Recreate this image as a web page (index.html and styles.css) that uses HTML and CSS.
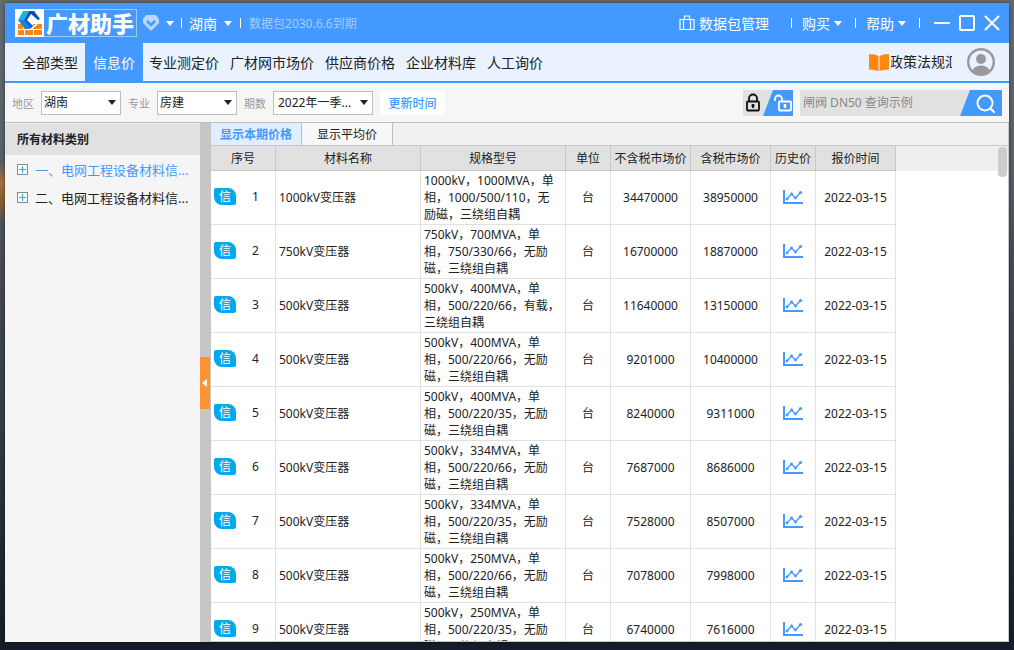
FILE: index.html
```html
<!DOCTYPE html>
<html lang="zh-CN">
<head>
<meta charset="utf-8">
<title>广材助手</title>
<link rel="stylesheet" href="styles.css">
</head>
<body>
<svg class="defs">
<symbol id="chart" viewBox="0 0 20 16">
<path d="M1 0V13H20" fill="none" stroke="#4499ff" stroke-width="2"/>
<path d="M4 9L8.500 4L12.500 8L17.500 2.500" fill="none" stroke="#4499ff" stroke-width="1.300"/>
<circle cx="4" cy="9" r="1.400" fill="#4499ff"/><circle cx="8.500" cy="4" r="1.400" fill="#4499ff"/><circle cx="12.500" cy="8" r="1.400" fill="#4499ff"/><circle cx="17.500" cy="2.500" r="1.600" fill="#4499ff"/>
</symbol>
<symbol id="plus" viewBox="0 0 11 11">
<rect x="0.500" y="0.500" width="10" height="10" fill="#fff" stroke="#8a8a8a"/>
<path d="M2 5.500H9M5.500 2V9" stroke="#29b6d8" stroke-width="1"/>
</symbol>
</svg>
<div class="window">

<header class="titlebar">
<div class="logo">
<svg class="mark" width="29" height="28" viewBox="0 0 29 28">
<rect width="29" height="28" fill="#fff"/>
<path d="M3 15H8V20H3ZM9 16L12 20H9ZM18 15H27V20H18ZM3 21H9V26H3ZM10 21H18V26H10ZM19 21H27V26H19Z" fill="#ff8614"/>
<path d="M2 11L8 2H14L8 11L17 19L22 15" fill="none" stroke="#fff" stroke-width="1.500"/>
<path d="M3 11L8 2H14L9 11Z" fill="#1cb2f0"/>
<path d="M9 11L14 2H19L25 10L23 11L16 5L12 11Z" fill="#0a50b4"/>
<path d="M3 11H11L18 17L15 20H10Z" fill="#1684e4"/>
<path d="M9 11H12L18 17L16 19Z" fill="#0a60c8"/>
</svg>
<span class="name">广材助手</span>
</div>
<svg class="gem" width="16" height="16" viewBox="0 0 16 16"><path d="M3 0H13L16 4V8L8 16L0 8V4Z" fill="#b9d8ff"/><path d="M4 6L8 10L12 6" fill="none" stroke="#4499ff" stroke-width="2.500"/></svg>
<i class="down"></i>
<i class="sep"></i>
<button class="menu city">湖南<i class="down"></i></button>
<i class="sep wide"></i>
<span class="expire">数据包2030.6.6到期</span>
<div class="right">
<button class="menu bag"><svg width="16" height="16" viewBox="0 0 16 16"><path d="M1 4.500H15V14.500H1ZM5.500 4V1H10.500V4M4.500 5V14M11.500 5V14" fill="none" stroke="#fff" stroke-width="1.200"/></svg>数据包管理</button>
<i class="sep"></i>
<button class="menu">购买<i class="down"></i></button>
<i class="sep"></i>
<button class="menu">帮助<i class="down"></i></button>
<i class="sep"></i>
<div class="winbtns">
<button aria-label="最小化"><svg width="16" height="16" viewBox="0 0 16 16"><path d="M0 8H16" stroke="#fff" stroke-width="2"/></svg></button>
<button aria-label="最大化"><svg width="16" height="16" viewBox="0 0 16 16"><rect x="1" y="1" width="14" height="14" rx="1" fill="none" stroke="#fff" stroke-width="2"/></svg></button>
<button aria-label="关闭"><svg width="16" height="16" viewBox="0 0 16 16"><path d="M1 1L15 15M15 1L1 15" stroke="#fff" stroke-width="2"/></svg></button>
</div>
</div>
</header>

<nav class="nav">
<a href="#" class="first">全部类型</a>
<a href="#" class="active">信息价</a>
<a href="#">专业测定价</a>
<a href="#">广材网市场价</a>
<a href="#">供应商价格</a>
<a href="#">企业材料库</a>
<a href="#">人工询价</a>
<div class="user">
<svg width="20" height="17" viewBox="0 0 20 17"><path d="M0 0Q6 0 9.500 2V17Q6 15.500 0 15.500Z" fill="#ff870f"/><path d="M20 0Q14 0 10.500 2V17Q14 15.500 20 15.500Z" fill="#ff870f"/></svg>
<a href="#" class="law">政策法规汇</a>
<svg class="avatar" width="28" height="28" viewBox="0 0 28 28">
<clipPath id="face"><circle cx="14" cy="14" r="13"/></clipPath>
<circle cx="14" cy="14" r="12.800" fill="#eaf1ff" stroke="#999" stroke-width="2.400"/>
<circle cx="14" cy="11" r="5" fill="#999"/>
<ellipse cx="14" cy="24" rx="9" ry="6.500" fill="#999" clip-path="url(#face)"/>
</svg>
</div>
</nav>

<div class="filters">
<label for="area">地区</label>
<select id="area"><option>湖南</option></select>
<label for="major">专业</label>
<select id="major"><option>房建</option></select>
<label for="period">期数</label>
<select id="period" class="wide"><option>2022年一季...</option></select>
<button class="update">更新时间</button>
<button class="lock" aria-label="锁定">
<svg width="50" height="26" viewBox="0 0 50 26">
<path d="M30 0H50V26H20Z" fill="#4499ff"/>
<path d="M6 11V8.500A4 4 0 0 1 14 8.500V11" fill="none" stroke="#111" stroke-width="1.800"/>
<rect x="4" y="11.500" width="12" height="9" rx="1" fill="none" stroke="#111" stroke-width="1.800"/>
<path d="M10 14V18M8.500 15.500H11.500" stroke="#111" stroke-width="1.800"/>
<path d="M32 11V9A3.500 3.500 0 0 1 39 9V12" fill="none" stroke="#fff" stroke-width="1.800"/>
<rect x="36" y="11.500" width="12" height="9" rx="1" fill="#4499ff" stroke="#fff" stroke-width="1.800"/>
<path d="M42 14V18" stroke="#fff" stroke-width="2.500"/>
</svg>
</button>
<div class="search">
<input type="text" aria-label="搜索" placeholder="闸阀 DN50 查询示例">
<button aria-label="查询"><svg width="42" height="26" viewBox="0 0 42 26"><path d="M10 0H42V26H0Z" fill="#4499ff"/><circle cx="25" cy="13" r="7.500" fill="none" stroke="#fff" stroke-width="2"/><path d="M30.500 18.500L34 22" stroke="#fff" stroke-width="2.200" stroke-linecap="round"/></svg></button>
</div>
</div>

<main class="main">
<aside class="side">
<h2>所有材料类别</h2>
<a href="#" class="on"><svg width="11" height="11"><use href="#plus"/></svg>一、电网工程设备材料信...</a>
<a href="#"><svg width="11" height="11"><use href="#plus"/></svg>二、电网工程设备材料信...</a>
</aside>
<div class="split"><button aria-label="收起"><svg width="5" height="8" viewBox="0 0 5 8"><path d="M5 0V8L0 4Z" fill="#fff"/></svg></button></div>

<section class="content">
<div class="tabs">
<button class="on">显示本期价格</button>
<button>显示平均价</button>
</div>
<div class="grid">
<table>
<thead>
<tr><th class="c1">序号</th><th class="c2">材料名称</th><th class="c2">规格型号</th><th class="c3">单位</th><th class="c4">不含税市场价</th><th class="c4">含税市场价</th><th class="c3">历史价</th><th class="c4">报价时间</th></tr>
</thead>
<tbody>
<tr><td><div class="no"><b>信</b><span>1</span></div></td><td class="l">1000kV变压器</td><td class="l">1000kV，1000MVA，单相，1000/500/110，无励磁，三绕组自耦</td><td>台</td><td>34470000</td><td>38950000</td><td><svg width="20" height="16"><use href="#chart"/></svg></td><td>2022-03-15</td></tr>
<tr><td><div class="no"><b>信</b><span>2</span></div></td><td class="l">750kV变压器</td><td class="l">750kV，700MVA，单相，750/330/66，无励磁，三绕组自耦</td><td>台</td><td>16700000</td><td>18870000</td><td><svg width="20" height="16"><use href="#chart"/></svg></td><td>2022-03-15</td></tr>
<tr><td><div class="no"><b>信</b><span>3</span></div></td><td class="l">500kV变压器</td><td class="l">500kV，400MVA，单相，500/220/66，有载，三绕组自耦</td><td>台</td><td>11640000</td><td>13150000</td><td><svg width="20" height="16"><use href="#chart"/></svg></td><td>2022-03-15</td></tr>
<tr><td><div class="no"><b>信</b><span>4</span></div></td><td class="l">500kV变压器</td><td class="l">500kV，400MVA，单相，500/220/66，无励磁，三绕组自耦</td><td>台</td><td>9201000</td><td>10400000</td><td><svg width="20" height="16"><use href="#chart"/></svg></td><td>2022-03-15</td></tr>
<tr><td><div class="no"><b>信</b><span>5</span></div></td><td class="l">500kV变压器</td><td class="l">500kV，400MVA，单相，500/220/35，无励磁，三绕组自耦</td><td>台</td><td>8240000</td><td>9311000</td><td><svg width="20" height="16"><use href="#chart"/></svg></td><td>2022-03-15</td></tr>
<tr><td><div class="no"><b>信</b><span>6</span></div></td><td class="l">500kV变压器</td><td class="l">500kV，334MVA，单相，500/220/66，无励磁，三绕组自耦</td><td>台</td><td>7687000</td><td>8686000</td><td><svg width="20" height="16"><use href="#chart"/></svg></td><td>2022-03-15</td></tr>
<tr><td><div class="no"><b>信</b><span>7</span></div></td><td class="l">500kV变压器</td><td class="l">500kV，334MVA，单相，500/220/35，无励磁，三绕组自耦</td><td>台</td><td>7528000</td><td>8507000</td><td><svg width="20" height="16"><use href="#chart"/></svg></td><td>2022-03-15</td></tr>
<tr><td><div class="no"><b>信</b><span>8</span></div></td><td class="l">500kV变压器</td><td class="l">500kV，250MVA，单相，500/220/66，无励磁，三绕组自耦</td><td>台</td><td>7078000</td><td>7998000</td><td><svg width="20" height="16"><use href="#chart"/></svg></td><td>2022-03-15</td></tr>
<tr><td><div class="no"><b>信</b><span>9</span></div></td><td class="l">500kV变压器</td><td class="l">500kV，250MVA，单相，500/220/35，无励磁，三绕组自耦</td><td>台</td><td>6740000</td><td>7616000</td><td><svg width="20" height="16"><use href="#chart"/></svg></td><td>2022-03-15</td></tr>
</tbody>
</table>
<div class="thumb"></div>
</div>
</section>
</main>
</div>
</body>
</html>
```
FILE: styles.css
```css
*{box-sizing: border-box;}
body{
	margin: 0;
	height: 100vh;
	padding: 3px 5px 8px;
	overflow: hidden;
	background: linear-gradient(transparent 25%, #a8713c 28%, #8a6038 31%, transparent 34%) left / 5px 100% no-repeat,
		linear-gradient(#656c70, #5a6268 25%, #474c58 40%, #353c49 65%, #1b2531 90%, #151d2a);
	font-family: "Noto Sans", "Noto Sans CJK SC", sans-serif;
	font-size: 12px;
	color: #222;
}
button,input,select{
	font: inherit;
	color: inherit;
	border: 0;
	padding: 0;
	margin: 0;
	background: none;
}
a{color: inherit; text-decoration: none;}
svg{display: block; flex: none;}
.defs{display: none;}
.window{
	height: 100%;
	display: flex;
	flex-direction: column;
	background: #fff;
	box-shadow: 0 0 4px rgba(0,0,0,.5);
}

/* title bar */
.titlebar{
	height: 40px;
	flex: none;
	display: flex;
	align-items: center;
	padding: 0 9px 0 10px;
	background: #4499ff;
	color: #fff;
	font-size: 14px;
	white-space: nowrap;
}
.logo{
	display: flex;
	align-items: center;
	height: 28px;
	border: 1px solid #9ccaff;
	border-left: 0;
}
.name{
	padding: 0 2px;
	font-size: 22px;
	line-height: 26px;
	font-weight: 900;
}
.gem{margin: 0 7px 0 6px;}
.down{
	border: 4px solid transparent;
	border-top: 5px solid #fff;
	border-bottom: 0;
}
.sep{
	width: 1px;
	height: 10px;
	margin: 0 7px;
	background: #fff;
}
.sep.wide{margin: 0 8px;}
.menu{
	display: flex;
	align-items: center;
	gap: 4px;
}
.city{gap: 7px;}
.expire{font-size: 12px; color: #a4ceff;}
.right{
	display: flex;
	align-items: center;
	margin-left: auto;
}
.right .sep{margin: 0 10px 0 13px;}
.right .bag{margin-right: 9px;}
.winbtns{
	display: flex;
	gap: 9px;
	margin-left: 4px;
}

/* main nav */
.nav{
	height: 40px;
	flex: none;
	display: flex;
	border-bottom: 2px solid #4499ff;
	background: #eaf1ff;
	font-size: 14px;
	line-height: 40px;
	white-space: nowrap;
}
.nav > a{padding: 0 5px 0 6px;}
.nav .first{padding: 0 7px 0 17px;}
.nav .active{
	padding: 0 8px;
	background: #4499ff;
	color: #fff;
}
.user{
	display: flex;
	align-items: center;
	margin: 0 14px 0 auto;
}
.law{
	width: 61px;
	margin: 0 15px 0 2px;
	overflow: hidden;
	text-indent: -2px;
}

/* filters */
.filters{
	flex: none;
	display: flex;
	align-items: center;
	gap: 7px;
	height: 40px;
	padding: 0 7px;
	border-bottom: 1px solid #bebebe;
	background: #f6f6f6;
}
.filters label{font-size: 11px; color: #999;}
.filters select{
	appearance: none;
	width: 80px;
	height: 24px;
	padding-left: 2px;
	border: 1px solid #bebebe;
	background: #fff url("data:image/svg+xml,%3Csvg xmlns='http://www.w3.org/2000/svg' width='8' height='5'%3E%3Cpath d='M0 0H8L4 5Z' fill='%23222'/%3E%3C/svg%3E") no-repeat right 4px center;
}
.filters .wide{width: 100px; padding-left: 4px;}
.update{
	width: 65px;
	height: 24px;
	background: #fff;
	color: #4499ff;
	font-weight: 500;
}
.lock{
	margin-left: auto;
	background: #e1e1e1;
}
.search{
	display: flex;
	width: 202px;
	background: #e1e1e1;
}
.search input{
	flex: 1;
	min-width: 0;
	padding-left: 3px;
}
.search input::placeholder{color: #888;}

/* body */
.main{
	flex: 1;
	min-height: 0;
	display: flex;
}
.side{
	width: 195px;
	flex: none;
	background: #f5f5f5;
	font-size: 13px;
	white-space: nowrap;
}
.side h2{
	margin: 0;
	padding-left: 12px;
	border-top: 1px solid #efefef;
	background: #e1e1e1;
	font-size: 12px;
	line-height: 31px;
}
.side a{
	display: flex;
	align-items: center;
	gap: 7px;
	height: 28px;
	padding-left: 12px;
}
.side .on{color: #4499ff;}
.split{
	width: 11px;
	flex: none;
	display: flex;
	align-items: center;
	background: #c8c6c4;
}
.split button{
	width: 10px;
	height: 52px;
	padding-left: 2px;
	background: #ff9233;
}
.content{
	flex: 1;
	min-width: 0;
	display: flex;
	flex-direction: column;
	border-right: 1px solid #c8c8c8;
	border-bottom: 1px solid #c8c8c8;
}
.tabs{
	flex: none;
	display: flex;
	height: 23px;
	border-bottom: 1px solid #c8c8c8;
	background: #f1f1f1;
}
.tabs button{
	width: 91px;
	border-right: 1px solid #bebebe;
	background: #f7f7f7;
}
.tabs .on{
	background: #e1eeff;
	color: #4499ff;
	font-weight: bold;
}

/* price table */
.grid{
	position: relative;
	flex: 1;
	min-height: 0;
	overflow: hidden;
	background: linear-gradient(#efefef 25px, #fff 25px);
}
table{
	table-layout: fixed;
	width: 685px;
	border-collapse: separate;
	border-spacing: 0;
}
th{
	height: 25px;
	padding: 1px 0 0;
	border-right: 1px solid #c8c8c8;
	border-bottom: 1px solid #c8c8c8;
	background: #e1e1e1;
	font-weight: normal;
	line-height: 23px;
	white-space: nowrap;
}
td{
	height: 54px;
	padding: 0;
	border-right: 1px solid #e1e1e1;
	border-bottom: 1px solid #e1e1e1;
	background: #fff;
	text-align: center;
	line-height: 17px;
}
.c1{width: 65px;}
.c2{width: 145px;}
.c3{width: 45px;}
.c4{width: 80px;}
.l{text-align: left; padding: 0 4px 0 3px;}
td svg{margin: 0 auto;}
.no{
	display: flex;
	align-items: center;
	padding: 0 0 2px 3px;
}
.no b{
	width: 22px;
	border-radius: 2px 8px 2px 8px;
	background: #00a8f0;
	color: #fff;
	font-weight: normal;
}
.no span{flex: 1;}
.thumb{
	position: absolute;
	top: 1px;
	right: 1px;
	width: 9px;
	height: 30px;
	border-radius: 4px;
	background: #cdcdcd;
}
```
